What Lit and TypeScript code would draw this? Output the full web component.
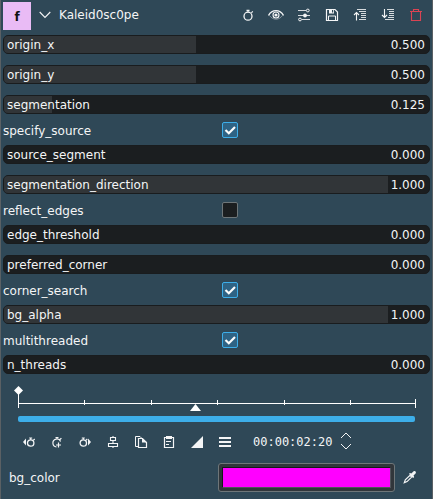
import { LitElement, html, svg, css } from "lit";
import { customElement, property } from "lit/decorators.js";

@customElement("param-slider")
class ParamSlider extends LitElement {
  @property() label = "";
  @property({ type: Number }) value = 0;
  static styles = css`
    :host { display: block; padding: 5px 0 6px; }
    .track { box-sizing: border-box; height: 19px; border: 1px solid #191c1e; border-radius: 5px; background: #1b1e20; display: grid; grid-template-columns: 384px 1fr; overflow: hidden; line-height: 19px; }
    .range { position: relative; height: 17px; }
    .fill { height: 17px; background: #313538; }
    .label { position: absolute; left: 3px; top: 0; }
    .value { text-align: right; padding-right: 4px; height: 17px; }
  `;
  render() {
    return html`<div class="track">
      <div class="range"><div class="fill" style="width:${this.value * 100}%"></div><span class="label">${this.label}</span></div>
      <div class="value">${this.value.toFixed(3)}</div>
    </div>`;
  }
}

@customElement("param-check")
class ParamCheck extends LitElement {
  @property() label = "";
  @property({ type: Boolean }) checked = false;
  static styles = css`
    :host { display: grid; grid-template-columns: 219px 16px; height: 20px; align-items: center; line-height: 18px; }
    .name { padding-top: 2px; }
    .box { box-sizing: border-box; width: 16px; height: 16px; border: 1px solid #6e7679; border-radius: 2px; background: #1b1e20; }
    .on { border-color: #3daee9; background: #2f6384; }
    svg { display: block; }
  `;
  render() {
    return html`<span class="name">${this.label}</span>
      <div class="box ${this.checked ? "on" : ""}">
        ${this.checked ? html`<svg width="14" height="14" viewBox="0 0 14 14"><path d="M2.500 7L5.800 10.200L12 4" fill="none" stroke="#fcfcfc" stroke-width="2.200"/></svg>` : ""}
      </div>`;
  }
}

const watch = (cx: number, cy: number, r: number) => svg`
  <circle cx=${cx} cy=${cy} r=${r} fill="none" stroke="currentColor" stroke-width="1.3"/>
  <path d="M${cx - 1.5} ${cy - r - 1.8}h3M${cx} ${cy - r - 2}v2M${cx + r - 0.6} ${cy - r + 0.6}l1.4-1.4" fill="none" stroke="currentColor" stroke-width="1.2"/>`;

const icons = {
  watch: watch(8, 9.2, 4),
  eye: svg`<path d="M.5 8.5C4 2 12 2 15.5 8.5" fill="none" stroke="currentColor" stroke-width="1.3"/><path d="M1.5 8.5C5 13.5 11 13.5 14.5 8.5" fill="none" stroke="currentColor" stroke-width=".8" opacity=".5"/><circle cx="8" cy="8" r="3" fill="none" stroke="currentColor" stroke-width="1.1"/><circle cx="8" cy="8" r="1.6" fill="currentColor"/>`,
  sliders: svg`<g fill="none" stroke="currentColor"><path d="M2 3.5h8M2 8.5h12M6 12.5h8" stroke-width="1.1" opacity=".85"/><circle cx="11.8" cy="3.5" r="1.4"/><circle cx="4" cy="12.5" r="1.4"/></g><circle cx="9" cy="8.5" r="1.9" fill="currentColor"/>`,
  save: svg`<path d="M2.5 2.5h8.5l2.5 2.5v8.500h-11z" fill="none" stroke="currentColor" stroke-width="1.2"/><path d="M5 2h5v4.500h-5z" fill="currentColor"/><path d="M8 3h1.200v2.500h-1.200z" fill="#2f4857"/><path d="M4.500 13.500v-4.500h7v4.500" fill="none" stroke="currentColor"/>`,
  up: svg`<path d="M5 2.500h9M7 4.500h7M9 6.500h5M9 8.500h5M9 10.500h5M7 12.500h7" stroke="currentColor" opacity=".85"/><path d="M4.500 13.500v-8M2 8l2.500-2.500L7 8" fill="none" stroke="currentColor" stroke-width="1.100"/>`,
  down: svg`<path d="M7 2.500h7M9 4.500h5M9 6.500h5M9 8.500h5M8 10.500h6M5 12.500h9" stroke="currentColor" opacity=".85"/><path d="M4.500 2v8.500M2 8l2.500 2.500L7 8" fill="none" stroke="currentColor" stroke-width="1.100"/>`,
  trash: svg`<path d="M2 4.500h12M5.500 4.500v-2h5v2M3.500 4.500v9h9v-9" fill="none" stroke="currentColor" stroke-width="1.100"/>`,
  prev: svg`${watch(9.700, 9, 3.200)}<path d="M5 4.500v7L2 8z" fill="currentColor"/>`,
  add: svg`<path d="M11.600 7.500A4 4 0 1 0 7.500 13M6.500 3.500h3M8 3v2M11 5.500l1.400-1.400" fill="none" stroke="currentColor" stroke-width="1.200"/><path d="M9.500 8.500v5M7 11h5" stroke="currentColor" stroke-width="1.200"/>`,
  next: svg`${watch(6.300, 9, 3.200)}<path d="M11 4.500v7L14 8z" fill="currentColor"/>`,
  align: svg`<path d="M5.500 3.500h5v3h-5zM3.500 9.500h9v3h-9zM8 2v1.500M8 6.500v3M8 12.500v1.500" fill="none" stroke="currentColor" stroke-width="1.100"/>`,
  copy: svg`<path d="M5.500 12.500h-3v-10h4.500l1.500 1.500" fill="none" stroke="currentColor"/><path d="M5.500 4.500h4l4 4v5h-8z" fill="none" stroke="currentColor" stroke-width="1.200"/><path d="M9 4v4.500h5z" fill="currentColor"/>`,
  paste: svg`<path d="M3.500 3.500h9v10h-9z" fill="none" stroke="currentColor" stroke-width="1.200"/><path d="M5 2h6v3h-6z" fill="currentColor"/><path d="M5 7.500h5M5 10.500h3" stroke="currentColor"/>`,
  ramp: svg`<path d="M2 14L14 2v12z" fill="currentColor"/>`,
  menu: svg`<path d="M2 4h12M2 8h12M2 12h12" stroke="currentColor" stroke-width="2"/>`,
  picker: svg`<path d="M2.300 13.700l1-2.800L8 6.300 9.700 8 5.100 12.600z" fill="none" stroke="currentColor" stroke-width="1.200"/><path d="M7 4.800l1-.9 1.300.6L11.400 2.400c1.400-1.200 3.400.6 2.200 2L11.500 6.500l.7 1.500-1 1-1.200-1-2-2z" fill="currentColor"/>`,
};
type IconName = keyof typeof icons;
const icon = (name: IconName) => html`<svg class="icon ${name}" width="16" height="16" viewBox="0 0 16 16">${icons[name]}</svg>`;

@customElement("app-root")
class AppRoot extends LitElement {
  static styles = css`
    :host { display: block; box-sizing: border-box; width: 433px; height: 499px; overflow: hidden; background: #2f4857; border: solid #5a6064; border-width: 0 1px; color: #f4f5f6; font: 12px "DejaVu Sans", sans-serif; }
    header { height: 30px; display: flex; align-items: center; padding-left: 2px; box-sizing: border-box; }
    .badge { width: 28px; height: 28px; margin-top: 2px; background: #e9bbf5; color: #111; font-weight: bold; text-align: center; line-height: 30px; }
    .chevron { margin: 0 8px 0 8px; }
    .title { flex: 1; }
    .actions { display: flex; gap: 12px; padding-right: 8px; }
    .icon { display: block; flex: none; }
    .trash { color: #da4453; }
    .params { padding: 0 2px; }
    .timeline { display: block; height: 45px; }
    .tools { display: flex; align-items: center; gap: 12px; height: 34px; padding-left: 20px; }
    .time { font-family: "DejaVu Sans Mono", monospace; margin-left: 8px; }
    .spin { margin: 0 0 2px -4px; }
    .color { display: grid; grid-template-columns: 209px 177px 16px; align-items: center; padding: 4px 0 0 8px; }
    .well { box-sizing: border-box; height: 29px; border: 1px solid #6e7679; border-radius: 3px; background: #31363b; padding: 3px; }
    .swatch { box-sizing: border-box; height: 21px; background: #f0f; border: 1px solid; border-color: #17191a #50555a #50555a #17191a; }
    .picker { margin: 0 0 2px 7px; }
  `;
  render() {
    const tick = (x: number) => svg`<path d="M${x} 20v5"/>`;
    return html`
      <header>
        <div class="badge">f</div>
        <svg class="chevron" width="12" height="8" viewBox="0 0 12 8"><path d="M.7 1L6 6.500L11.300 1" fill="none" stroke="currentColor" stroke-width="1.100"/></svg>
        <span class="title">Kaleid0sc0pe</span>
        <div class="actions">${(["watch", "eye", "sliders", "save", "up", "down", "trash"] as IconName[]).map(icon)}</div>
      </header>
      <div class="params">
        <param-slider label="origin_x" value="0.5"></param-slider>
        <param-slider label="origin_y" value="0.5"></param-slider>
        <param-slider label="segmentation" value="0.125"></param-slider>
        <param-check label="specify_source" checked></param-check>
        <param-slider label="source_segment" value="0"></param-slider>
        <param-slider label="segmentation_direction" value="1"></param-slider>
        <param-check label="reflect_edges"></param-check>
        <param-slider label="edge_threshold" value="0"></param-slider>
        <param-slider label="preferred_corner" value="0"></param-slider>
        <param-check label="corner_search" checked></param-check>
        <param-slider label="bg_alpha" value="1"></param-slider>
        <param-check label="multithreaded" checked></param-check>
        <param-slider label="n_threads" value="0"></param-slider>
      </div>
      <svg class="timeline" width="431" height="45" viewBox="1 0 431 45">
        <path d="M18.500 6l4.500 4.500-4.500 4.500-4.500-4.500z" fill="#fff"/>
        <g stroke="#fff" shape-rendering="crispEdges"><path d="M18.500 11v17M18 23.500h398M415.500 19v9"/>${[84.5, 151.5, 217.5, 284.5, 350.5].map(tick)}</g>
        <path d="M190 31h11l-5.500-7z" fill="#fff"/>
        <rect x="18" y="36" width="397" height="6" rx="2" fill="#3daee9"/>
      </svg>
      <div class="tools">
        ${(["prev", "add", "next", "align", "copy", "paste", "ramp", "menu"] as IconName[]).map(icon)}
        <span class="time">00:00:02:20</span>
        <svg class="spin" width="12" height="18" viewBox="0 0 12 18"><path d="M1 6L6 1L11 6M1 12L6 17L11 12" fill="none" stroke="currentColor"/></svg>
      </div>
      <div class="color"><span>bg_color</span><div class="well"><div class="swatch"></div></div>${icon("picker")}</div>
    `;
  }
}
